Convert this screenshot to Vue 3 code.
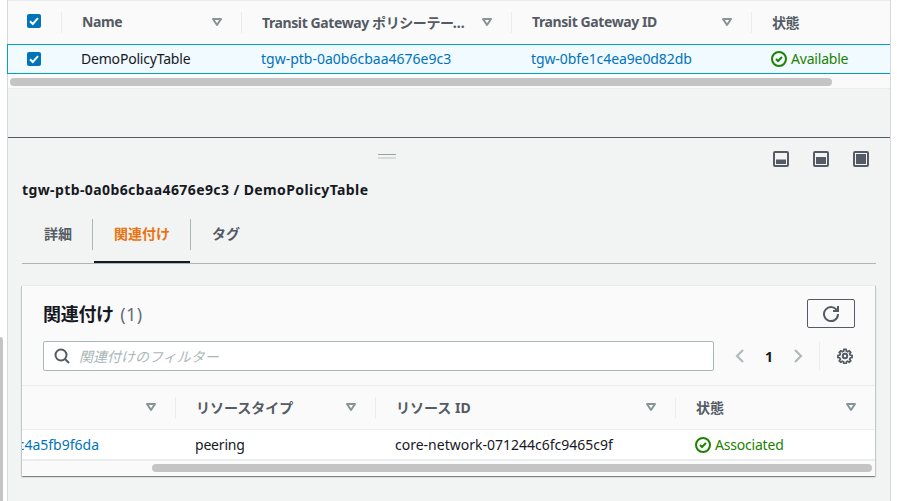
<script setup>
const topHeaders = [
  { label: 'Transit Gateway ポリシーテーブル ID', sort: true },
  { label: 'Transit Gateway ID', sort: true },
  { label: '状態', sort: false },
]
const assocHeaders = [
  { label: '', sort: true },
  { label: 'リソースタイプ', sort: true },
  { label: 'リソース ID', sort: true },
  { label: '状態', sort: true },
]
const tabs = [
  { label: '詳細', active: false },
  { label: '関連付け', active: true },
  { label: 'タグ', active: false },
]
const panes = [
  { x: 3, y: 8.5, w: 10, h: 4.5 },
  { x: 3, y: 6, w: 10, h: 7 },
  { x: 3, y: 3, w: 10, h: 10 },
]
</script>

<template>
  <div class="page">
    <div class="page-scroll"></div>
    <main class="main">
      <section class="top">
        <div class="grid-top head">
          <div class="cell check-cell">
            <span class="box"><svg viewBox="0 0 14 14" width="14" height="14"><path d="M3 7.2l2.8 2.8L11 4.2" class="tick" /></svg></span>
          </div>
          <div class="cell hcell">
            <span class="hlabel tight">Name</span>
            <svg class="sort" viewBox="0 0 16 16" width="16" height="16"><path d="M4 5h8l-4 6z" /></svg>
          </div>
          <div v-for="h in topHeaders" :key="h.label" class="cell hcell">
            <span class="hlabel tight">{{ h.label }}</span>
            <svg v-if="h.sort" class="sort" viewBox="0 0 16 16" width="16" height="16"><path d="M4 5h8l-4 6z" /></svg>
          </div>
        </div>
        <div class="grid-top row">
          <div class="bcell check-cell">
            <span class="box"><svg viewBox="0 0 14 14" width="14" height="14"><path d="M3 7.2l2.8 2.8L11 4.2" class="tick" /></svg></span>
          </div>
          <div class="bcell snug">DemoPolicyTable</div>
          <div class="bcell link">tgw-ptb-0a0b6cbaa4676e9c3</div>
          <div class="bcell link snug-id">tgw-0bfe1c4ea9e0d82db</div>
          <div class="bcell ok snug">
            <svg class="status" viewBox="0 0 16 16" width="16" height="16"><circle cx="8" cy="8" r="7" /><path d="M5 8l2 2 4-4" /></svg>
            Available
          </div>
        </div>
        <div class="track track-top"><div class="thumb thumb-top"></div></div>
      </section>

      <div class="gap"></div>

      <section class="panel">
        <div class="handle"></div>
        <div class="tools">
          <svg v-for="(p, i) in panes" :key="i" class="pane" viewBox="0 0 16 16" width="16" height="16">
            <rect x="1" y="1" width="14" height="14" rx="1" class="pane-frame" />
            <rect :x="p.x" :y="p.y" :width="p.w" :height="p.h" class="pane-fill" />
          </svg>
        </div>
        <h2 class="title">tgw-ptb-0a0b6cbaa4676e9c3 / DemoPolicyTable</h2>
        <nav class="tabs">
          <div v-for="t in tabs" :key="t.label" class="tab" :class="{ active: t.active }">{{ t.label }}</div>
        </nav>

        <div class="card">
          <div class="card-head">
            <div class="card-title-row">
              <h3 class="card-title">関連付け <span class="count">(1)</span></h3>
              <button class="refresh">
                <svg class="line" viewBox="0 0 16 16" width="16" height="16"><path d="M10 5h5V0" /><path d="M15 8a7 7 0 1 1-.7-3" /></svg>
              </button>
            </div>
            <div class="filter-row">
              <div class="filter">
                <svg class="line search" viewBox="0 0 16 16" width="16" height="16"><circle cx="7" cy="7" r="5.5" /><path d="M11 11l4 4" /></svg>
                <span class="placeholder">関連付けのフィルター</span>
              </div>
              <div class="pager">
                <svg class="chev" viewBox="0 0 16 16" width="16" height="16"><path d="M11 2L5 8l6 6" /></svg>
                <span class="page-num">1</span>
                <svg class="chev" viewBox="0 0 16 16" width="16" height="16"><path d="M5 2l6 6-6 6" /></svg>
              </div>
              <div class="settings">
                <svg class="line gear" viewBox="0 0 16 16" width="16" height="16">
                  <path d="M6.8 1h2.4l.4 2 1.3.6 1.8-1.1 1.6 1.7-1.1 1.7.6 1.3 2 .5v2.4l-2 .4-.6 1.3 1.1 1.8-1.6 1.6-1.8-1.1-1.3.6-.4 2H6.8l-.4-2-1.3-.6-1.8 1.1-1.6-1.6 1.1-1.8-.6-1.3-2-.4V7.7l2-.5.6-1.3-1.1-1.7 1.6-1.7 1.8 1.1 1.3-.6z" transform="translate(8 8) scale(.9) translate(-8 -8.3)" />
                  <circle cx="8" cy="8" r="2.2" />
                </svg>
              </div>
            </div>
          </div>
          <div class="grid-assoc head-assoc">
            <div v-for="(h, i) in assocHeaders" :key="i" class="cell hcell">
              <span class="hlabel">{{ h.label }}</span>
              <svg class="sort" viewBox="0 0 16 16" width="16" height="16"><path d="M4 5h8l-4 6z" /></svg>
            </div>
          </div>
          <div class="grid-assoc row-assoc">
            <div class="bcell link clip">tgw-attach-0e1c4a5fb9f6da</div>
            <div class="bcell snug">peering</div>
            <div class="bcell">core-network-071244c6fc9465c9f</div>
            <div class="bcell ok snug">
              <svg class="status" viewBox="0 0 16 16" width="16" height="16"><circle cx="8" cy="8" r="7" /><path d="M5 8l2 2 4-4" /></svg>
              Associated
            </div>
          </div>
          <div class="track track-assoc"><div class="thumb thumb-assoc"></div></div>
        </div>
      </section>
    </main>
  </div>
</template>

<style>
html, body { margin: 0; background: #fff; }
</style>

<style scoped>
.page {
  position: relative;
  width: 897px;
  height: 501px;
  overflow: hidden;
  background: #fff;
  padding: 0 6px 0 7px;
  box-sizing: border-box;
  font-family: "Noto Sans", "Noto Sans CJK JP", sans-serif;
  font-size: 14px;
  color: #16191f;
}
.page-scroll {
  position: absolute;
  left: 0;
  top: 337px;
  width: 3px;
  height: 164px;
  background: #c4c4c4;
  border-top-right-radius: 3px;
}
.main {
  height: 501px;
  box-sizing: border-box;
  border-left: 1px solid #d5dbdb;
  border-right: 1px solid #d5dbdb;
  background: #f2f3f3;
  display: flex;
  flex-direction: column;
}
.top { background: #fafafa; border-top: 1px solid #eaeded; border-bottom: 1px solid #eaeded; }
.grid-top { display: grid; grid-template-columns: 54px 180px 270px 240px 138px; }
.head { height: 43px; align-items: center; }
.cell { display: flex; align-items: center; height: 21px; box-sizing: border-box; border-right: 1px solid #eaeded; min-width: 0; }
.cell:last-child { border-right: 0; }
.check-cell { padding-left: 19px; }
.head .check-cell { padding-bottom: 3px; }
.hcell { padding: 0 16px 2px 20px; color: #545b64; font-weight: 700; justify-content: space-between; gap: 8px; }
.hlabel { flex: 1; min-width: 0; white-space: nowrap; overflow: hidden; text-overflow: ellipsis; }
.tight { letter-spacing: -0.4px; }
.sort { flex: none; }
.sort path { fill: none; stroke: #879596; stroke-width: 2; stroke-linejoin: round; }
.box { display: block; width: 14px; height: 14px; border-radius: 2px; background: #0073bb; }
.box svg { display: block; }
.tick { fill: none; stroke: #fff; stroke-width: 2; }
.row {
  height: 30px;
  box-sizing: border-box;
  margin-left: -1px;
  border: 1px solid #00a1c9;
  border-right: 0;
  background: #f1faff;
  align-items: center;
}
.bcell { padding-left: 19px; white-space: nowrap; min-width: 0; display: flex; align-items: center; gap: 4px; line-height: 20px; }
.snug { letter-spacing: -0.2px; }
.snug-id { letter-spacing: -0.1px; }
.link { color: #0073bb; }
.ok { color: #1d8102; }
.status { flex: none; }
.status circle, .status path { fill: none; stroke: #1d8102; stroke-width: 2; }
.track { background: #fafafa; box-sizing: border-box; }
.thumb { background: #c4c4c4; height: 8px; border-radius: 4px; }
.track-top { height: 14px; padding: 4px 0 0 2px; }
.thumb-top { width: 822px; }
.gap { height: 48px; border-bottom: 1px solid #545b64; flex: none; }
.panel { position: relative; padding: 0 14px; flex: 1; min-height: 0; }
.handle {
  position: absolute;
  left: 370px;
  top: 16px;
  width: 18px;
  height: 2px;
  border-top: 1px solid #95a5a6;
  border-bottom: 2px solid #d5dbdb;
}
.tools { display: flex; justify-content: flex-end; gap: 24px; padding: 13px 7px 0 0; height: 16px; }
.pane { display: block; }
.pane-frame { fill: none; stroke: #545b64; stroke-width: 2; }
.pane-fill { fill: #545b64; }
.title { margin: 13px 0 0; font-size: 14px; line-height: 20px; font-weight: 700; color: #16191f; letter-spacing: 0.4px; }
.tabs { display: flex; height: 45px; margin-top: 18px; border-bottom: 1px solid #aab7b8; }
.tab {
  position: relative;
  box-sizing: border-box;
  height: 31px;
  margin-top: 1px;
  padding: 0 22px 4px;
  display: flex;
  align-items: center;
  color: #545b64;
  font-weight: 700;
  white-space: nowrap;
}
.tab:first-child { padding-right: 20px; border-right: 1px solid #aab7b8; }
.tab:last-child { padding-left: 21px; }
.tab.active { color: #ec7211; margin-left: 1px; padding: 0 20px 4px; border-right: 1px solid #aab7b8; }
.tab.active::after {
  content: "";
  position: absolute;
  left: 0;
  right: 0;
  bottom: -13px;
  height: 2px;
  background: #16191f;
}
.card {
  margin-top: 21px;
  width: 853px;
  height: 191px;
  box-sizing: border-box;
  overflow: hidden;
  background: #fafafa;
  box-shadow: 0 1px 1px 0 rgba(0, 28, 36, 0.3), 1px 1px 1px 0 rgba(0, 28, 36, 0.15), -1px 1px 1px 0 rgba(0, 28, 36, 0.15);
  border-top: 1px solid #eaeded;
}
.card-head { height: 100px; box-sizing: border-box; padding: 13px 20px 0 21px; border-bottom: 1px solid #eaeded; }
.card-title-row { display: flex; justify-content: space-between; align-items: center; height: 29px; }
.card-title { margin: 0; padding-top: 2px; font-size: 18px; line-height: 27px; font-weight: 700; color: #16191f; letter-spacing: -0.3px; }
.count { color: #687078; font-weight: 400; letter-spacing: 0.4px; margin-left: 2px; }
.refresh {
  width: 48px;
  height: 29px;
  padding: 0;
  background: transparent;
  border: 1px solid #545b64;
  border-radius: 2px;
  display: flex;
  align-items: center;
  justify-content: center;
}
.line { fill: none; stroke: #545b64; stroke-width: 2; display: block; }
.filter-row { display: flex; align-items: center; height: 30px; margin-top: 13px; }
.filter {
  width: 671px;
  height: 30px;
  box-sizing: border-box;
  background: #fff;
  border: 1px solid #aab7b8;
  border-radius: 2px;
  display: flex;
  align-items: center;
  padding-left: 10px;
  gap: 9px;
  flex: none;
}
.placeholder { font-style: italic; color: #aab7b8; }
.pager { display: flex; align-items: center; margin-left: 18px; gap: 17px; width: 87px; }
.chev { fill: none; stroke: #aab7b8; stroke-width: 2; flex: none; }
.page-num { font-weight: 700; font-size: 14px; width: 8px; text-align: center; }
.settings { height: 30px; border-left: 1px solid #eaeded; padding-left: 17px; display: flex; align-items: center; }
.grid-assoc { display: grid; grid-template-columns: 154px 200px 300px 199px; }
.head-assoc { height: 43px; align-items: center; }
.row-assoc { height: 32px; background: #fff; border-top: 1px solid #eaeded; border-bottom: 2px solid #eaeded; box-sizing: border-box; align-items: center; }
.row-assoc .bcell { padding-left: 19px; }
.row-assoc .clip { justify-content: flex-end; padding-right: 77px; overflow: hidden; padding-left: 0; }
.track-assoc { height: 14px; padding: 3px 0 0 130px; background: #fafafa; }
.thumb-assoc { width: 720px; }
</style>
